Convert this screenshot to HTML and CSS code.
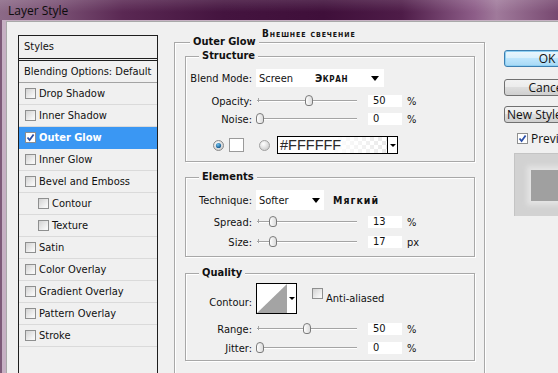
FILE: index.html
```html
<!DOCTYPE html>
<html>
<head>
<meta charset="utf-8">
<link rel="stylesheet" href="styles.css">
</head>
<body>
<div class="window">
  <div class="titlebar"><span class="title">Layer Style</span></div>
  <div class="client">
    <div class="styles-list">
      <div class="list-head">Styles</div>
      <div class="list-row blending">Blending Options: Default</div>
      <div class="list-row"><span class="cb"></span>Drop Shadow</div>
      <div class="list-row"><span class="cb"></span>Inner Shadow</div>
      <div class="list-row selected"><span class="cb checked"><svg width="9" height="9" viewBox="0 0 9 9"><path d="M1.5 4.5 L3.6 7 L7.6 1.5" fill="none" stroke="#2b4fa8" stroke-width="1.8"/></svg></span>Outer Glow</div>
      <div class="list-row"><span class="cb"></span>Inner Glow</div>
      <div class="list-row"><span class="cb"></span>Bevel and Emboss</div>
      <div class="list-row sub"><span class="cb"></span>Contour</div>
      <div class="list-row sub"><span class="cb"></span>Texture</div>
      <div class="list-row"><span class="cb"></span>Satin</div>
      <div class="list-row"><span class="cb"></span>Color Overlay</div>
      <div class="list-row"><span class="cb"></span>Gradient Overlay</div>
      <div class="list-row"><span class="cb"></span>Pattern Overlay</div>
      <div class="list-row"><span class="cb"></span>Stroke</div>
    </div>

    <div class="main">
      <div class="annot">Внешнее свечение</div>
      <fieldset class="group outer">
        <legend>Outer Glow</legend>

        <fieldset class="group inner structure">
          <legend>Structure</legend>
          <div class="row select-row">
            <span class="lbl">Blend Mode:</span>
            <div class="select blend"><span class="opt">Screen</span><span class="ru">Экран</span><span class="arrow"></span></div>
          </div>
          <div class="row slider-row opacity">
            <span class="lbl">Opacity:</span>
            <div class="slider"><span class="thumb" style="left:49px"></span></div>
            <span class="num">50</span><span class="unit">%</span>
          </div>
          <div class="row slider-row noise">
            <span class="lbl">Noise:</span>
            <div class="slider"><span class="thumb" style="left:0px"></span></div>
            <span class="num">0</span><span class="unit">%</span>
          </div>
          <div class="row color-row">
            <svg class="radio" width="11" height="11" viewBox="0 0 11 11"><defs><radialGradient id="rg1" cx="0.4" cy="0.35" r="0.7"><stop offset="0" stop-color="#ffffff"/><stop offset="1" stop-color="#c9c9c9"/></radialGradient><radialGradient id="dot" cx="0.4" cy="0.35" r="0.7"><stop offset="0" stop-color="#6fc3f0"/><stop offset="1" stop-color="#0d4f86"/></radialGradient></defs><circle cx="5.5" cy="5.5" r="5" fill="url(#rg1)" stroke="#8a8a8a"/><circle cx="5.5" cy="5.5" r="2.6" fill="url(#dot)"/></svg>
            <span class="swatch"></span>
            <svg class="radio r2" width="11" height="11" viewBox="0 0 11 11"><circle cx="5.5" cy="5.5" r="5" fill="url(#rg1)" stroke="#a0a0a0"/></svg>
            <div class="gradient"><span class="hex">#FFFFFF</span><span class="gdrop"><span class="arrow small"></span></span></div>
          </div>
        </fieldset>

        <fieldset class="group inner elements">
          <legend>Elements</legend>
          <div class="row select-row tech">
            <span class="lbl">Technique:</span>
            <div class="select technique"><span class="opt">Softer</span><span class="arrow"></span></div>
            <span class="ru2">Мягкий</span>
          </div>
          <div class="row slider-row spread">
            <span class="lbl">Spread:</span>
            <div class="slider"><span class="thumb" style="left:13px"></span></div>
            <span class="num">13</span><span class="unit">%</span>
          </div>
          <div class="row slider-row size">
            <span class="lbl">Size:</span>
            <div class="slider"><span class="thumb" style="left:13px"></span></div>
            <span class="num">17</span><span class="unit">px</span>
          </div>
        </fieldset>

        <fieldset class="group inner quality">
          <legend>Quality</legend>
          <div class="row contour-row">
            <span class="lbl contour-lbl">Contour:</span>
            <div class="contour"><svg width="30" height="29" viewBox="0 0 30 29"><polygon points="0,29 30,0 30,29" fill="#a4a4a4"/></svg><span class="cdrop"><span class="arrow small"></span></span></div>
            <span class="cb aa"></span><span class="aa-text">Anti-aliased</span>
          </div>
          <div class="row slider-row range">
            <span class="lbl">Range:</span>
            <div class="slider"><span class="thumb" style="left:47px"></span></div>
            <span class="num">50</span><span class="unit">%</span>
          </div>
          <div class="row slider-row jitter">
            <span class="lbl">Jitter:</span>
            <div class="slider"><span class="thumb" style="left:0px"></span></div>
            <span class="num">0</span><span class="unit">%</span>
          </div>
        </fieldset>
      </fieldset>
    </div>

    <div class="buttons">
      <div class="btn ok">OK</div>
      <div class="btn cancel">Cancel</div>
      <div class="btn newstyle">New Style...</div>
      <div class="preview-row"><span class="cb checked"><svg width="9" height="9" viewBox="0 0 9 9"><path d="M1.5 4.5 L3.6 7 L7.6 1.5" fill="none" stroke="#2b4fa8" stroke-width="1.8"/></svg></span><span>Preview</span></div>
      <div class="preview-box"><div class="preview-sq"></div></div>
    </div>
  </div>
</div>
</body>
</html>
```

FILE: styles.css
```css
html, body {
  margin: 0;
  padding: 0;
}
body {
  width: 558px;
  height: 373px;
  overflow: hidden;
  font-family: "DejaVu Sans Condensed", "DejaVu Sans", sans-serif;
  font-size: 11px;
  color: #111;
}
.window {
  height: 373px;
  display: flex;
  flex-direction: column;
  background: linear-gradient(to right, #7d5a78 0, #7d5a78 2px, #c6b0c3 2px, #c6b0c3 100%);
}
.titlebar {
  height: 20px;
  flex: none;
  display: flex;
  align-items: center;
  padding-left: 8px;
  font-family: "Open Sans", "Noto Sans", sans-serif;
  font-size: 12px;
  color: #0c0c0c;
  background:
    linear-gradient(to bottom, rgba(255,255,255,0.12), rgba(255,255,255,0) 60%),
    linear-gradient(to right, #8c6a87 0%, #7a5174 10%, #5a2853 22%, #44143f 40%, #3f0f3a 58%, #4e1c48 72%, #8d5d88 85%, #a07a9b 89%, #774870 100%);
}
.client {
  flex: 1;
  min-height: 0;
  margin: 1px 0 0 6px;
  border-left: 1px solid #a9a9a9;
  border-top: 1px solid #a9a9a9;
  background: #f0f0f0;
  display: flex;
  align-items: flex-start;
  padding: 13px 0 0 11px;
  overflow: hidden;
}

/* styles list */
.styles-list {
  flex: none;
  width: 138px;
  height: 360px;
  border: 1px solid #1e1e1e;
  border-bottom: none;
  margin-right: 16px;
  background: #f0f0f0;
}
.list-head {
  height: 22px;
  line-height: 22px;
  padding-left: 5px;
  border-bottom: 3px double #1e1e1e;
}
.list-row {
  height: 21px;
  border-bottom: 1px solid #dadada;
  display: flex;
  align-items: center;
  padding-left: 6px;
  white-space: nowrap;
}
.list-row.blending {
  padding-left: 5px;
  border-bottom-color: #a3a3a3;
}
.list-row.sub {
  padding-left: 19px;
}
.list-row.selected {
  background: #3a97f3;
  color: #fff;
  font-weight: bold;
  border-bottom-color: #3a97f3;
}
.cb {
  flex: none;
  width: 9px;
  height: 9px;
  border: 1px solid #8e8f8f;
  background: linear-gradient(135deg, #d2d2d2, #f6f6f6 80%);
  margin-right: 3px;
  display: flex;
}
.cb.checked {
  background: #fff;
  border-color: #8e8f8f;
}

/* main panel */
.main {
  flex: none;
  width: 311px;
  position: relative;
  margin-right: 19px;
}
.annot {
  position: absolute;
  left: 88px;
  top: -7px;
  font-weight: bold;
  font-variant: small-caps;
  font-size: 10px;
  line-height: 11px;
  letter-spacing: 0.9px;
  color: #111;
  white-space: nowrap;
}
fieldset.group {
  margin: 0;
  min-width: 0;
  border: 1px solid #a8a8a8;
  box-shadow: inset 1px 1px 0 #fff, 1px 1px 0 #fff;
}
fieldset.group > legend {
  font-weight: bold;
  padding: 0 3px;
  height: 14px;
  line-height: 14px;
  background: #f0f0f0;
}
.outer {
  padding: 0 9px 40px 10px;
}
.outer > legend {
  margin-left: 5px;
}
.inner {
  padding: 0 0 7px 0;
}
.inner > legend {
  margin-left: 13px;
}
.elements {
  margin-top: 8px !important;
  padding-bottom: 8px;
}
.quality {
  margin-top: 9px !important;
  padding-bottom: 6px;
}

.row {
  display: flex;
  align-items: center;
  white-space: nowrap;
}
.lbl {
  flex: none;
  width: 66px;
  text-align: right;
  margin-right: 4px;
}
.select-row {
  margin-top: 6px;
  height: 18px;
}
.select {
  flex: none;
  height: 18px;
  box-sizing: border-box;
  background: #fff;
  display: flex;
  align-items: center;
  padding-left: 3px;
}
.select.blend {
  width: 128px;
}
.select.technique {
  width: 68px;
  height: 20px;
}
.row.tech {
  height: 20px;
}
.opt {
  display: inline-block;
}
.blend .opt {
  width: 56px;
}
.ru {
  font-weight: bold;
  font-variant: small-caps;
  letter-spacing: 0.6px;
}
.ru2 {
  font-weight: bold;
  letter-spacing: 1px;
  margin-left: 9px;
  font-size: 10.5px;
}
.arrow {
  margin-left: auto;
  margin-right: 5px;
  width: 0;
  height: 0;
  border-left: 4px solid transparent;
  border-right: 4px solid transparent;
  border-top: 5px solid #000;
}
.technique .arrow {
  margin-right: 4px;
}
.arrow.small {
  margin: 0;
  border-left-width: 3px;
  border-right-width: 3px;
  border-top-width: 3px;
}

.slider-row {
  height: 12px;
  margin-top: 6px;
}
.opacity { margin-top: 8px; }
.size { margin-top: 8px; }
.range { margin-top: 9px; }
.jitter { margin-top: 7px; }
.slider {
  flex: none;
  width: 101px;
  height: 12px;
  position: relative;
  margin-right: 11px;
}
.slider::before {
  content: "";
  position: absolute;
  left: 1px;
  right: 0;
  top: 5px;
  height: 1px;
  background: #a4a4a4;
  border-bottom: 1px solid #fff;
}
.slider::after {
  content: "";
  position: absolute;
  left: 2px;
  top: 3px;
  width: 1px;
  height: 4px;
  background: #a4a4a4;
}
.thumb {
  position: absolute;
  top: 0;
  width: 6px;
  height: 9px;
  border: 1px solid #7b7b7b;
  border-radius: 4px 4px 3px 3px;
  background: linear-gradient(to right, #fdfdfd, #dcdcdc);
  z-index: 1;
}
.num {
  flex: none;
  width: 34px;
  height: 12px;
  line-height: 12px;
  box-sizing: border-box;
  padding-left: 5px;
  background: #fff;
  margin-right: 5px;
}

.color-row {
  margin-top: 11px;
  height: 18px;
  padding-left: 27px;
}
.radio {
  flex: none;
  display: block;
}
.swatch {
  flex: none;
  width: 13px;
  height: 12px;
  border: 1px solid #9a9a9a;
  background: #fff;
  margin-left: 5px;
}
.radio.r2 {
  margin-left: 15px;
}
.gradient {
  flex: none;
  margin-left: 7px;
  width: 121px;
  height: 18px;
  box-sizing: border-box;
  border: 1px solid #000;
  display: flex;
  background:
    linear-gradient(to right, #fff 0, #fff 45%, rgba(255,255,255,0.35) 100%),
    repeating-conic-gradient(#d6d6d6 0 25%, #ffffff 0 50%) 0 0 / 8px 8px;
}
.hex {
  flex: 1;
  font-family: "Liberation Sans", Arial, sans-serif;
  font-size: 14.5px;
  line-height: 16px;
  padding-left: 2px;
  color: #2a2a2a;
}
.gdrop {
  flex: none;
  width: 9px;
  border-left: 1px solid #000;
  background: #fff;
  display: flex;
  align-items: center;
  justify-content: center;
}

.contour-row {
  margin-top: 3px;
  height: 31px;
  align-items: flex-start;
}
.contour-lbl {
  margin-top: 13px;
}
.contour {
  flex: none;
  width: 41px;
  height: 31px;
  box-sizing: border-box;
  border: 1px solid #000;
  background: #fff;
  display: flex;
}
.contour svg {
  display: block;
}
.cdrop {
  flex: 1;
  display: flex;
  align-items: center;
  justify-content: center;
}
.cb.aa {
  margin-left: 15px;
  margin-top: 5px;
}
.aa-text {
  margin-top: 9px;
}

/* buttons */
.buttons {
  flex: none;
  width: 86px;
  padding-top: 15px;
  font-family: "Open Sans", "Noto Sans", sans-serif;
  font-size: 12px;
  color: #111;
}
.btn {
  height: 17px;
  box-sizing: border-box;
  border: 1px solid #707070;
  border-radius: 3px;
  text-align: center;
  line-height: 15px;
  background: linear-gradient(to bottom, #f2f2f2 0, #ebebeb 50%, #dddddd 50%, #cfcfcf 100%);
  white-space: nowrap;
}
.btn.ok {
  border-color: #3c7fb1;
  background: linear-gradient(to bottom, #eaf6fd 0, #d9f0fc 50%, #bee6fd 50%, #a7d9f5 100%);
  box-shadow: inset 0 0 0 1px #8fd0f3;
}
.btn.cancel {
  margin-top: 12px;
}
.btn.newstyle {
  margin-top: 10px;
  text-align: left;
  padding-left: 2px;
}
.preview-row {
  margin-top: 10px;
  height: 11px;
  display: flex;
  align-items: center;
  padding-left: 13px;
}
.preview-row .cb {
  margin-right: 3px;
}
.preview-box {
  margin: 9px 0 0 10px;
  width: 76px;
  height: 63px;
  box-sizing: border-box;
  background: #d2d2d2;
  border-top: 1px solid #c4c4c4;
  border-left: 1px solid #c4c4c4;
  padding: 16px 0 0 16px;
}
.preview-sq {
  width: 50px;
  height: 31px;
  background: #a0a0a0;
  box-shadow: 0 0 5px 4px #e4e4e4;
}
```
